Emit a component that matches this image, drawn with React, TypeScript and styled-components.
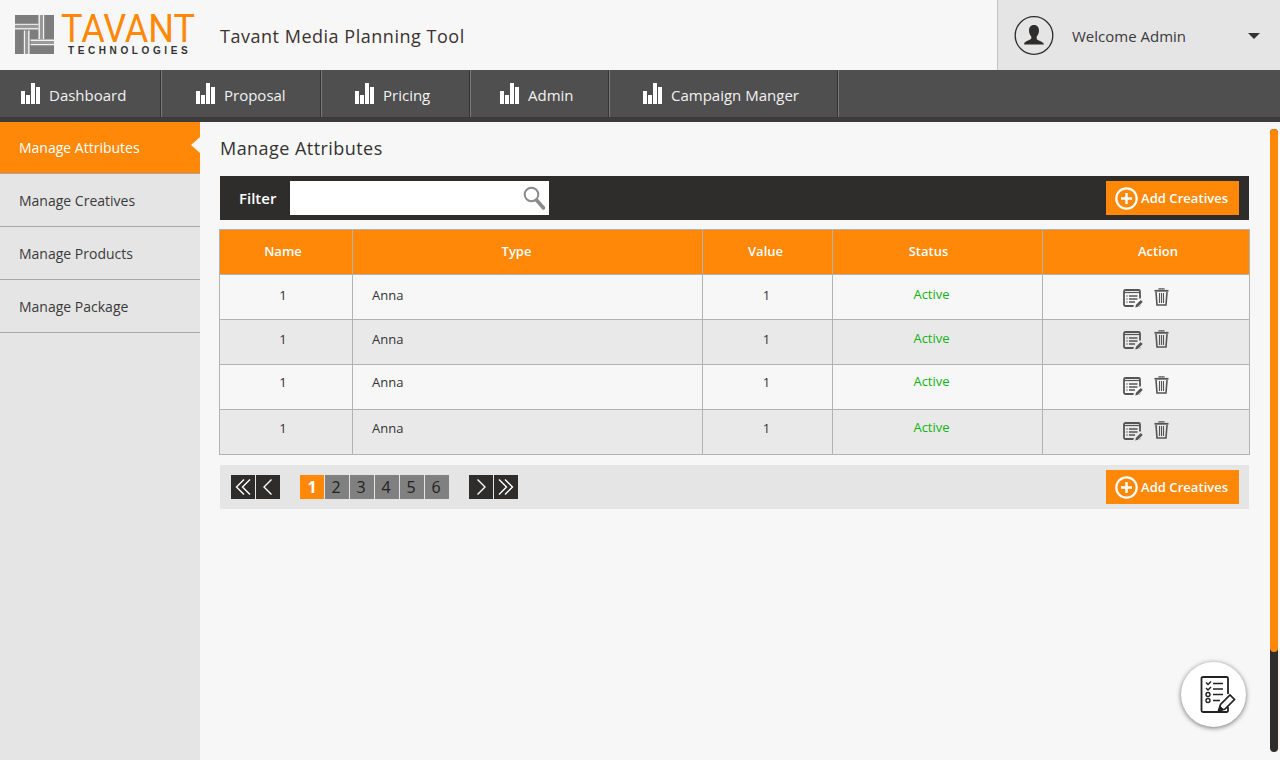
import React from "react";
import styled, { createGlobalStyle } from "styled-components";

const Global = createGlobalStyle`
  html, body { margin: 0; padding: 0; height: 100%; overflow: hidden; }
  body { font-family: "Open Sans", "Liberation Sans", sans-serif; background: #f7f7f7; color: #333; }
  * { box-sizing: border-box; }
`;

const Page = styled.div`
  width: 1280px; height: 760px; display: flex; flex-direction: column; position: relative; overflow: hidden;
`;
const Header = styled.header`
  height: 70px; display: flex; align-items: stretch; background: #f7f7f7; flex: none;
`;
const Brand = styled.div`
  display: flex; align-items: flex-start; padding: 15px 0 0 15px; width: 220px; flex: none;
`;
const LogoWords = styled.div`
  display: flex; flex-direction: column; margin-left: 7px;
`;
const LogoMain = styled.span`
  font-family: "Roboto", sans-serif; font-weight: 400; font-size: 39px; line-height: 29px; height: 29px; color: #ff8809; letter-spacing: 0; transform: scaleX(.925); transform-origin: left center; white-space: nowrap;
`;
const LogoSub = styled.span`
  font-family: "Liberation Sans", sans-serif; font-size: 10px; line-height: 12px; color: #333; letter-spacing: 3.6px; margin: 1px 0 0 7px; font-weight: 700; white-space: nowrap;
`;
const AppTitle = styled.h1`
  flex: 1; margin: 0; font-size: 18px; font-weight: 400; color: #3a3330; line-height: 72px; letter-spacing: .52px;
`;
const UserBox = styled.div`
  width: 283px; flex: none; background: #e5e5e5; border-left: 1px solid #c4c4c4; display: flex; align-items: center; padding: 2px 0 0 16px;
`;
const UserName = styled.span`
  font-size: 15px; color: #3a3a3a; margin-left: 18px; flex: 1;
`;
const Caret = styled.span`
  width: 0; height: 0; border-left: 6px solid transparent; border-right: 6px solid transparent; border-top: 6px solid #333; margin-right: 20px; margin-top: -1px;
`;
const Nav = styled.nav`
  height: 52px; flex: none; background: #4f4f4f; border-bottom: 5px solid #3d3b3b; display: flex;
`;
const NavItem = styled.a<{ $w: number; $pad: number }>`
  width: ${p => p.$w}px; padding-left: ${p => p.$pad}px; border-right: 1px solid #7b7b7b; display: flex; align-items: center; color: #f2f2f2; font-size: 15px; box-shadow: inset -1px 0 0 #333;
`;
const NavLabel = styled.span`
  margin-left: 9px; position: relative; top: 1px;
`;
const Body = styled.div`
  flex: 1; display: flex; min-height: 0;
`;
const Side = styled.aside`
  width: 200px; flex: none; background: #e5e5e5;
`;
const SideItem = styled.div<{ $active?: boolean }>`
  height: ${p => (p.$active ? 52 : 53)}px; padding-left: 19px; display: flex; align-items: center; font-size: 14px; position: relative;
  color: ${p => (p.$active ? "#fff" : "#3a3a3a")};
  background: ${p => (p.$active ? "#ff8809" : "#e5e5e5")};
  border-bottom: 1px solid #a6a6a6;
  ${p => p.$active ? `&::after { content: ""; position: absolute; right: 0; top: 15px; border-style: solid; border-width: 8px 9px 8px 0; border-color: transparent #f7f7f7 transparent transparent; }` : ""}
`;
const Main = styled.main`
  flex: 1; padding: 0 31px 0 20px; min-width: 0;
`;
const Title = styled.h2`
  margin: 0; height: 54px; font-size: 18px; font-weight: 400; color: #333; line-height: 53px; letter-spacing: .45px;
`;
const FilterBar = styled.div`
  height: 44px; background: #2f2d2c; display: flex; align-items: center; padding: 0 10px 0 19px;
`;
const FilterLabel = styled.span`
  color: #fff; font-size: 15px; font-weight: 600; width: 51px;
`;
const SearchBox = styled.div`
  width: 259px; height: 34px; background: #fff; display: flex; align-items: center; justify-content: flex-end; padding-right: 3px;
`;
const AddButton = styled.button`
  margin-left: auto; width: 133px; height: 34px; background: #ff8809; border: 0; padding: 0 0 0 9px; display: flex; align-items: center; color: #fff; font: 600 13px "Open Sans", sans-serif;
`;
const AddText = styled.span`
  margin-left: 3px; letter-spacing: .05px;
`;
const Table = styled.table`
  width: 1030px; margin: 9px 0 0 -1px; border-collapse: collapse; table-layout: fixed; font-size: 13px;
`;
const Th = styled.th<{ $shift: number }>`
  height: 45px; background: #ff8809; color: #fff; font-size: 13px; font-weight: 600; border: 1px solid #b3b3b3;
  padding: 0 ${p => (p.$shift < 0 ? -2 * p.$shift : 0)}px 3px ${p => (p.$shift > 0 ? 2 * p.$shift : 0)}px;
`;
const Td = styled.td<{ $left?: boolean; $nudge: number; $shift?: number }>`
  height: 45px; border: 1px solid #b3b3b3; text-align: ${p => (p.$left ? "left" : "center")}; color: #333;
  padding: 0 ${p => -2 * (p.$shift || 0)}px ${p => p.$nudge}px ${p => (p.$left ? "19px" : "0")};
`;
const ActionCell = styled.td`
  height: 45px; border: 1px solid #b3b3b3; padding: 0;
`;
const Row = styled.tr<{ $alt: boolean }>`
  background: ${p => (p.$alt ? "#e9e9e9" : "#f7f7f7")};
`;
const Status = styled.span`
  color: #13b313; position: relative; left: -6px; top: -1px;
`;
const Actions = styled.div<{ $dy: number }>`
  display: flex; justify-content: center; align-items: flex-start; gap: 11px; position: relative; top: ${p => p.$dy}px; height: 19px;
`;
const TrashSlot = styled.span`
  display: block; margin-top: -1px; height: 18px;
`;
const Pager = styled.div`
  height: 44px; margin-top: 10px; background: #e5e5e5; display: flex; align-items: center; padding: 0 10px 0 11px;
`;
const PageGroup = styled.div<{ $gap: number }>`
  display: flex; gap: 1px; margin-right: ${p => p.$gap}px;
`;
const PageBtn = styled.div<{ $kind: "dark" | "on" | "off" }>`
  width: 24px; height: 24px; display: flex; align-items: center; justify-content: center; font-size: 16px;
  padding-right: ${p => (p.$kind === "off" ? 2 : 0)}px;
  background: ${p => (p.$kind === "dark" ? "#2f2d2c" : p.$kind === "on" ? "#ff8809" : "#808080")};
  color: ${p => (p.$kind === "on" ? "#fff" : "#222")};
  font-weight: ${p => (p.$kind === "on" ? 700 : 400)};
`;
const Scroll = styled.div`
  position: absolute; left: 1270px; top: 129px; width: 8px; height: 623px; border-radius: 4px; background: #2f2d2c; overflow: hidden;
`;
const ScrollThumb = styled.div`
  height: 523px; background: #ff8809; border-radius: 0 0 4px 4px;
`;
const Fab = styled.div`
  position: absolute; left: 1181px; top: 662px; width: 65px; height: 65px; border-radius: 50%; background: #fff; box-shadow: 0 1px 5px rgba(0,0,0,.55); display: flex; align-items: center; justify-content: center; padding-left: 8px;
`;

const LogoMark = () => (
  <svg width="39" height="39" viewBox="0 0 40 40" style={{ flex: "none" }}>
    <rect width="40" height="40" fill="#7d7d7d" />
    <g fill="none" stroke="#f2f2f2" strokeWidth="1.500">
      <path d="M0 9.800H24M0 14.200H24M0 12H24" strokeOpacity=".9" />
      <path d="M24.800 0V24.500M29.200 0V24.500" />
      <path d="M9.800 16V40M14.200 16V40" />
      <path d="M16 25.800H40M16 30.200H40" />
    </g>
    <path d="M0 12H24M27 0V24.500M12 16V40M16 28H40" stroke="#9a9a9a" strokeWidth="2.500" />
  </svg>
);
const Bars = () => (
  <svg width="19" height="21" viewBox="0 0 19 21" fill="#fff">
    <rect x="0" y="8" width="4" height="13" />
    <rect x="5" y="12" width="4" height="9" />
    <rect x="10" y="0" width="4" height="21" />
    <rect x="15" y="4" width="4" height="17" />
  </svg>
);
const UserIcon = () => (
  <svg width="40" height="40" viewBox="0 0 40 40">
    <circle cx="20" cy="19.500" r="18.800" fill="none" stroke="#2f2d2c" strokeWidth="1.300" />
    <path d="M20 9c-3.500 0-5 2.600-5 5.600 0 2.300.8 4.500 2.300 5.800v2c0 1-4.700 1.800-7.100 4.600v1.500h19.600V27.500c-2.400-2.800-7.100-3.600-7.100-4.600v-2.500c1.500-1.300 2.300-3.500 2.300-5.800C25 11.600 23.500 9 20 9z" fill="#2f2d2c" />
  </svg>
);
const SearchIcon = () => (
  <svg width="24" height="26" viewBox="0 0 24 26" fill="none">
    <circle cx="9.500" cy="9.500" r="6.800" stroke="#8a8a8a" strokeWidth="2" />
    <path d="M14.500 15l7 8" stroke="#8a8a8a" strokeWidth="3.500" strokeLinecap="round" />
  </svg>
);
const PlusCircle = () => (
  <svg width="23" height="23" viewBox="0 0 23 23" fill="none" stroke="#fff">
    <circle cx="11.500" cy="11.500" r="10.200" strokeWidth="2.200" />
    <path d="M11.500 6v11M6 11.500h11" strokeWidth="2.400" />
  </svg>
);
const EditIcon = ({ bg }: { bg: string }) => (
  <svg width="20" height="19" viewBox="0 0 20 19" fill="none" stroke="#555" style={{ display: "block" }}>
    <rect x="1" y="1" width="16" height="16" rx="1.500" strokeWidth="1.800" />
    <path d="M1 3.500h16" strokeWidth="1.200" />
    <path d="M3.500 7h1M6 7h8.500M3.500 10h1M6 10h8.500M3.500 13h1M6 13h6" strokeWidth="1.300" />
    <path d="M10 20l1-5 6-6 4 4-6 6z" fill={bg} stroke="none" />
    <path d="M12.200 18.500l.8-2.700 4.800-4.800 1.900 1.900-4.800 4.800z" fill="#555" stroke="none" />
  </svg>
);
const TrashIcon = () => (
  <svg width="15" height="18" viewBox="0 0 15 18" fill="none" stroke="#555" style={{ display: "block" }}>
    <path d="M.5 2.800h14" strokeWidth="1.800" />
    <path d="M5 1.500V.8h5v.7" strokeWidth="1.200" />
    <path d="M2 4l1 13h9l1-13" strokeWidth="1.600" />
    <path d="M5.500 5v10M7.500 5v10M9.500 5v10" strokeWidth="1.100" />
  </svg>
);
const Chevron = ({ left, double }: { left?: boolean; double?: boolean }) => (
  <svg width="18" height="16" viewBox="0 0 18 16" fill="none" stroke="#fff" strokeWidth="1.400">
    <g transform={left ? "translate(18,0) scale(-1,1)" : undefined}>
      {double ? (
        <>
          <path d="M2 .5l7.500 7.500-7.500 7.500" />
          <path d="M8 .5l7.500 7.500-7.500 7.500" />
        </>
      ) : (
        <path d="M5.500 .5l7.500 7.500-7.500 7.500" />
      )}
    </g>
  </svg>
);
const Checklist = () => (
  <svg width="36" height="38" viewBox="0 0 36 38" fill="none" stroke="#222">
    <path d="M28 18V2.500A1.500 1.500 0 0 0 26.500 1H3A1.500 1.500 0 0 0 1.500 2.500v32A1.500 1.500 0 0 0 3 36h23.500A1.500 1.500 0 0 0 28 34.500V31" strokeWidth="1.800" />
    <path d="M6 6.500l2 2 3-3M6 12l2 2 3-3" strokeWidth="1.500" />
    <circle cx="8" cy="18.500" r="2" strokeWidth="1.400" />
    <circle cx="8" cy="24.500" r="2" strokeWidth="1.400" />
    <path d="M13 7.500h10M13 13h10M13 18.500h10M13 24.500h7" strokeWidth="1.500" />
    <path d="M18.500 35l2-6.500 9.500-9.500 4.500 4.500-9.500 9.500z" fill="#fff" strokeWidth="1.700" />
    <path d="M18.500 35l1.500-5 3.500 3.500z" fill="#222" strokeWidth=".8" />
  </svg>
);

const navItems: [string, number, number][] = [
  ["Dashboard", 162, 21],
  ["Proposal", 160, 34],
  ["Pricing", 149, 33],
  ["Admin", 139, 29],
  ["Campaign Manger", 229, 33],
];
const sideItems = ["Manage Attributes", "Manage Creatives", "Manage Products", "Manage Package"];
const rows: { nudge: number; dy: number }[] = [
  { nudge: 5, dy: 1 },
  { nudge: 7, dy: -2 },
  { nudge: 10, dy: -1 },
  { nudge: 8, dy: -1 },
];
const headers: [string, number][] = [["Name", -3], ["Type", -11], ["Value", -2], ["Status", -9], ["Action", 12]];

const Add = () => (
  <AddButton>
    <PlusCircle />
    <AddText>Add Creatives</AddText>
  </AddButton>
);

export default function App() {
  return (
    <Page>
      <Global />
      <Header>
        <Brand>
          <LogoMark />
          <LogoWords>
            <LogoMain>TAVANT</LogoMain>
            <LogoSub>TECHNOLOGIES</LogoSub>
          </LogoWords>
        </Brand>
        <AppTitle>Tavant Media Planning Tool</AppTitle>
        <UserBox>
          <UserIcon />
          <UserName>Welcome Admin</UserName>
          <Caret />
        </UserBox>
      </Header>
      <Nav>
        {navItems.map(([label, w, pad]) => (
          <NavItem key={label} $w={w} $pad={pad}>
            <Bars />
            <NavLabel>{label}</NavLabel>
          </NavItem>
        ))}
      </Nav>
      <Body>
        <Side>
          {sideItems.map((s, i) => (
            <SideItem key={s} $active={i === 0}>{s}</SideItem>
          ))}
        </Side>
        <Main>
          <Title>Manage Attributes</Title>
          <FilterBar>
            <FilterLabel>Filter</FilterLabel>
            <SearchBox><SearchIcon /></SearchBox>
            <Add />
          </FilterBar>
          <Table>
            <colgroup>
              <col style={{ width: 133 }} />
              <col style={{ width: 350 }} />
              <col style={{ width: 130 }} />
              <col style={{ width: 210 }} />
              <col style={{ width: 207 }} />
            </colgroup>
            <thead>
              <tr>
                {headers.map(([h, s]) => <Th key={h} $shift={s}>{h}</Th>)}
              </tr>
            </thead>
            <tbody>
              {rows.map((r, i) => (
                <Row key={i} $alt={i % 2 === 1}>
                  <Td $nudge={r.nudge} $shift={-3}>1</Td>
                  <Td $left $nudge={r.nudge}>Anna</Td>
                  <Td $nudge={r.nudge} $shift={-1}>1</Td>
                  <Td $nudge={r.nudge}><Status>Active</Status></Td>
                  <ActionCell>
                    <Actions $dy={r.dy}>
                      <EditIcon bg={i % 2 === 1 ? "#e9e9e9" : "#f7f7f7"} />
                      <TrashSlot><TrashIcon /></TrashSlot>
                    </Actions>
                  </ActionCell>
                </Row>
              ))}
            </tbody>
          </Table>
          <Pager>
            <PageGroup $gap={20}>
              <PageBtn $kind="dark"><Chevron left double /></PageBtn>
              <PageBtn $kind="dark"><Chevron left /></PageBtn>
            </PageGroup>
            <PageGroup $gap={20}>
              {[1, 2, 3, 4, 5, 6].map(n => (
                <PageBtn key={n} $kind={n === 1 ? "on" : "off"}>{n}</PageBtn>
              ))}
            </PageGroup>
            <PageGroup $gap={0}>
              <PageBtn $kind="dark"><Chevron /></PageBtn>
              <PageBtn $kind="dark"><Chevron double /></PageBtn>
            </PageGroup>
            <Add />
          </Pager>
        </Main>
      </Body>
      <Scroll><ScrollThumb /></Scroll>
      <Fab><Checklist /></Fab>
    </Page>
  );
}
